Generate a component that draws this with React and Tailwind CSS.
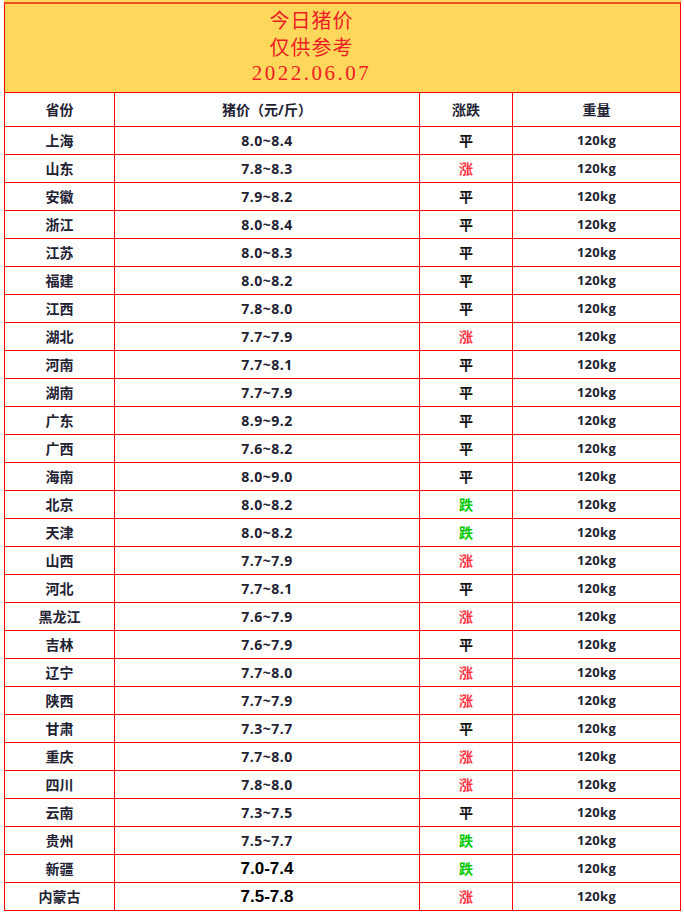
import React from "react";

const rows = [
  ["上海", "8.0~8.4", "平"],
  ["山东", "7.8~8.3", "涨"],
  ["安徽", "7.9~8.2", "平"],
  ["浙江", "8.0~8.4", "平"],
  ["江苏", "8.0~8.3", "平"],
  ["福建", "8.0~8.2", "平"],
  ["江西", "7.8~8.0", "平"],
  ["湖北", "7.7~7.9", "涨"],
  ["河南", "7.7~8.1", "平"],
  ["湖南", "7.7~7.9", "平"],
  ["广东", "8.9~9.2", "平"],
  ["广西", "7.6~8.2", "平"],
  ["海南", "8.0~9.0", "平"],
  ["北京", "8.0~8.2", "跌"],
  ["天津", "8.0~8.2", "跌"],
  ["山西", "7.7~7.9", "涨"],
  ["河北", "7.7~8.1", "平"],
  ["黑龙江", "7.6~7.9", "涨"],
  ["吉林", "7.6~7.9", "平"],
  ["辽宁", "7.7~8.0", "涨"],
  ["陕西", "7.7~7.9", "涨"],
  ["甘肃", "7.3~7.7", "平"],
  ["重庆", "7.7~8.0", "涨"],
  ["四川", "7.8~8.0", "涨"],
  ["云南", "7.3~7.5", "平"],
  ["贵州", "7.5~7.7", "跌"],
  ["新疆", "7.0-7.4", "跌", true],
  ["内蒙古", "7.5-7.8", "涨", true],
];

const trendColor = {
  平: "text-[#111111]",
  涨: "text-[#ff3344]",
  跌: "text-[#00c800]",
};

const cell =
  "flex items-center justify-center border-r border-b border-[#ff0000]";

export default function App() {
  return (
    <div className="min-h-screen bg-white font-['Open_Sans','Noto_Sans_CJK_SC',sans-serif] text-[#222233]">
      <div className="ml-[4px] w-[677px]">
        {/* thin strip above the top line */}
        <div className="h-[2px] bg-[#ffd75a]" />

        {/* TITLE */}
        <div className="flex h-[91px] flex-col items-center border-x border-b border-t-2 border-[#ff0000] border-t-[#f0501e] bg-[#ffd75a] pt-[2px] pr-[62px] text-[20px] leading-[27px] text-[#ee1c25]">
          <div className="font-['Noto_Sans_CJK_SC',sans-serif] tracking-[1px]">今日猪价</div>
          <div className="font-['Noto_Sans_CJK_SC',sans-serif] tracking-[1px]">仅供参考</div>
          <div className="font-['Liberation_Serif',serif] text-[21px] tracking-[2.5px]">2022.06.07</div>
        </div>

        {/* TABLE */}
        <div className="border-l border-[#ff0000]">
          <div className="grid h-[34px] grid-cols-[110px_305px_93px_168px] text-[14px] font-bold">
            <div className={cell}>省份</div>
            <div className={cell}>猪价（元/斤）</div>
            <div className={cell}>涨跌</div>
            <div className={cell}>重量</div>
          </div>

          {rows.map(([prov, price, trend, big]) => (
            <div
              key={prov}
              className="grid h-[28px] grid-cols-[110px_305px_93px_168px] text-[14px] font-bold"
            >
              <div className={cell}>{prov}</div>
              <div
                className={
                  big
                    ? `${cell} font-['Liberation_Sans',sans-serif] text-[17px] text-black`
                    : `${cell} tracking-[0.5px]`
                }
              >
                {price}
              </div>
              <div className={`${cell} ${trendColor[trend]}`}>{trend}</div>
              <div className={`${cell} text-[13px] tracking-[0.3px]`}>120kg</div>
            </div>
          ))}
        </div>
      </div>
    </div>
  );
}
